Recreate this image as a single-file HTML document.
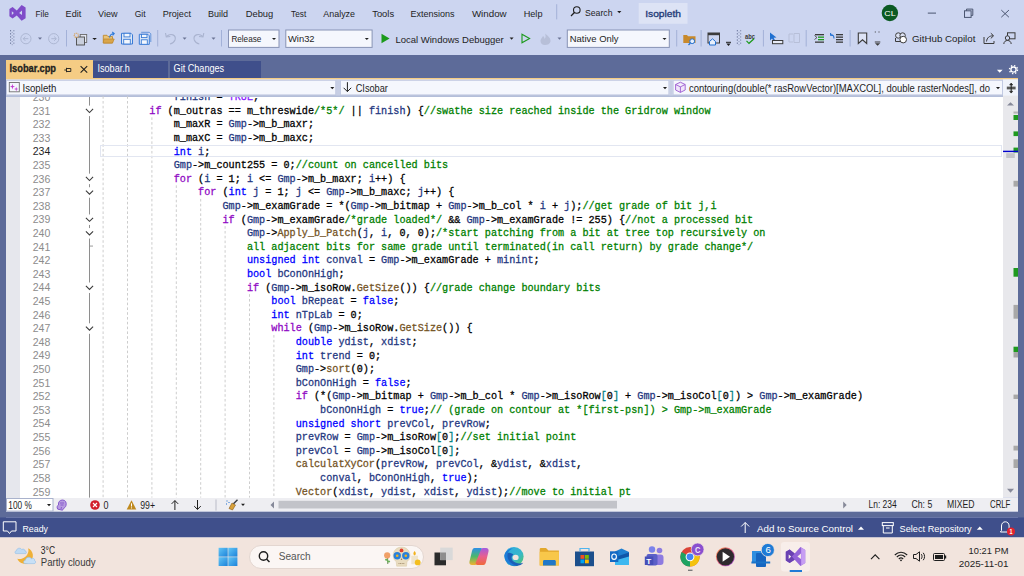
<!DOCTYPE html>
<html><head><meta charset="utf-8"><style>
html,body{margin:0;padding:0;width:1024px;height:576px;overflow:hidden;background:#CCD5F0}
svg{display:block}
text{font-family:"Liberation Sans",sans-serif}
text.mono{font-family:"Liberation Mono",monospace} .t{fill:#000} .ln{fill:#8C8C8C} .lnc{fill:#1E1E1E}
.t{stroke:#000} .k{fill:#0000FF;stroke:#0000FF} .c{fill:#8F08C4;stroke:#8F08C4} .v{fill:#1F377F;stroke:#1F377F} .f{fill:#74531F;stroke:#74531F} .g{fill:#008000;stroke:#008000} .mc{fill:#8A1BFF;stroke:#8A1BFF} .o{fill:#008080;stroke:#008080}
text.mono{stroke-width:0.28px}
</style></head><body>
<svg width="1024" height="576" viewBox="0 0 1024 576">
<rect x="0" y="0" width="1024" height="576" fill="#CCD5F0" />
<rect x="0" y="55" width="1024" height="23" fill="#5D6B99" />
<rect x="0" y="55" width="6" height="463" fill="#5D6B99" />
<rect x="1018" y="55" width="6" height="463" fill="#5D6B99" />
<rect x="0" y="511.5" width="1024" height="6" fill="#5D6B99" />
<rect x="6" y="60" width="87" height="18" fill="#F5CC84" />
<rect x="93" y="61" width="75" height="17" fill="#3F4F8B" />
<rect x="170" y="61" width="91" height="17" fill="#3F4F8B" />
<rect x="6" y="78" width="1012" height="1.6" fill="#F5CC84" />
<rect x="6" y="79.6" width="1012" height="16.4" fill="#F0F3FB" />
<rect x="6" y="95" width="997" height="2" fill="#B4BED9" />
<rect x="6" y="97" width="997" height="401" fill="#FFFFFF" />
<rect x="6" y="97" width="14" height="401" fill="#E6E7ED" />
<rect x="1003" y="79.6" width="15" height="418" fill="#E8E8EC" />
<rect x="6" y="498" width="1012" height="13.5" fill="#EEEEF2" />
<rect x="0" y="517.5" width="1024" height="20" fill="#3F4F8B" />
<rect x="0" y="537.4" width="1024" height="38.6" fill="#F2E4DD" />
<rect x="89.0" y="97.0" width="1" height="8.6" fill="#8E8E8E" />
<rect x="89.0" y="116.1" width="1" height="57.54" fill="#8E8E8E" />
<rect x="89.0" y="184.14" width="1" height="3.11" fill="#8E8E8E" />
<rect x="89.0" y="197.74" width="1" height="16.71" fill="#8E8E8E" />
<rect x="89.0" y="224.96" width="1" height="3.11" fill="#8E8E8E" />
<rect x="89.0" y="238.56" width="1" height="43.93" fill="#8E8E8E" />
<rect x="89.0" y="292.99" width="1" height="30.32" fill="#8E8E8E" />
<rect x="89.0" y="333.81" width="1" height="163.79" fill="#8E8E8E" />
<path d="M85.9,108.90 L89.5,112.50 L93.1,108.90" fill="none" stroke="#3A3A3A" stroke-width="1.05"/>
<path d="M85.9,176.94 L89.5,180.54 L93.1,176.94" fill="none" stroke="#3A3A3A" stroke-width="1.05"/>
<path d="M85.9,190.54 L89.5,194.14 L93.1,190.54" fill="none" stroke="#3A3A3A" stroke-width="1.05"/>
<path d="M85.9,217.76 L89.5,221.36 L93.1,217.76" fill="none" stroke="#3A3A3A" stroke-width="1.05"/>
<path d="M85.9,231.36 L89.5,234.96 L93.1,231.36" fill="none" stroke="#3A3A3A" stroke-width="1.05"/>
<path d="M85.9,285.79 L89.5,289.39 L93.1,285.79" fill="none" stroke="#3A3A3A" stroke-width="1.05"/>
<path d="M85.9,326.61 L89.5,330.21 L93.1,326.61" fill="none" stroke="#3A3A3A" stroke-width="1.05"/>
<path d="M89.5,246.07 L93,246.07" stroke="#8E8E8E" stroke-width="0.9"/>
<line x1="103.10" y1="96.20" x2="103.10" y2="497.6" stroke="#CDCDCD" stroke-width="1" stroke-dasharray="2.6,2.2"/>
<line x1="127.50" y1="96.20" x2="127.50" y2="497.6" stroke="#CDCDCD" stroke-width="1" stroke-dasharray="2.6,2.2"/>
<line x1="151.90" y1="117.31" x2="151.90" y2="497.6" stroke="#CDCDCD" stroke-width="1" stroke-dasharray="2.6,2.2"/>
<line x1="176.30" y1="185.34" x2="176.30" y2="497.6" stroke="#CDCDCD" stroke-width="1" stroke-dasharray="2.6,2.2"/>
<line x1="200.70" y1="198.95" x2="200.70" y2="497.6" stroke="#CDCDCD" stroke-width="1" stroke-dasharray="2.6,2.2"/>
<line x1="225.10" y1="226.16" x2="225.10" y2="497.6" stroke="#CDCDCD" stroke-width="1" stroke-dasharray="2.6,2.2"/>
<line x1="249.50" y1="294.20" x2="249.50" y2="497.6" stroke="#CDCDCD" stroke-width="1" stroke-dasharray="2.6,2.2"/>
<line x1="273.90" y1="335.02" x2="273.90" y2="497.6" stroke="#CDCDCD" stroke-width="1" stroke-dasharray="2.6,2.2"/>
<clipPath id="cc"><rect x="6" y="97" width="997" height="401"/></clipPath><g clip-path="url(#cc)">
<rect x="100.5" y="145.5" width="901" height="11" fill="none" stroke="#E2E6F1" stroke-width="1"/>
<text class="ln" x="50.3" y="100.89" font-size="11" text-anchor="end" textLength="17.6" lengthAdjust="spacingAndGlyphs">230</text>
<text class="mono t" xml:space="preserve" x="173.70" y="100.09" font-size="10.6" textLength="85.40" lengthAdjust="spacingAndGlyphs"><tspan class="v">finish</tspan> = <tspan class="mc">TRUE</tspan>;</text>
<text class="ln" x="50.3" y="114.50" font-size="11" text-anchor="end" textLength="17.6" lengthAdjust="spacingAndGlyphs">231</text>
<text class="mono t" xml:space="preserve" x="149.30" y="113.70" font-size="10.6" textLength="561.20" lengthAdjust="spacingAndGlyphs"><tspan class="c">if</tspan> (m_outras == m_threswide<tspan class="g">/*5*/</tspan> || <tspan class="v">finish</tspan>) {<tspan class="g">//swathe size reached inside the Gridrow window</tspan></text>
<text class="ln" x="50.3" y="128.11" font-size="11" text-anchor="end" textLength="17.6" lengthAdjust="spacingAndGlyphs">232</text>
<text class="mono t" xml:space="preserve" x="173.70" y="127.31" font-size="10.6" textLength="140.30" lengthAdjust="spacingAndGlyphs">m_maxR = <tspan class="v">Gmp</tspan>-&gt;m_b_maxr;</text>
<text class="ln" x="50.3" y="141.71" font-size="11" text-anchor="end" textLength="17.6" lengthAdjust="spacingAndGlyphs">233</text>
<text class="mono t" xml:space="preserve" x="173.70" y="140.91" font-size="10.6" textLength="140.30" lengthAdjust="spacingAndGlyphs">m_maxC = <tspan class="v">Gmp</tspan>-&gt;m_b_maxc;</text>
<text class="lnc" x="50.3" y="155.32" font-size="11" text-anchor="end" textLength="17.6" lengthAdjust="spacingAndGlyphs">234</text>
<text class="mono t" xml:space="preserve" x="173.70" y="154.52" font-size="10.6" textLength="36.60" lengthAdjust="spacingAndGlyphs"><tspan class="k">int</tspan> <tspan class="v">i</tspan>;</text>
<text class="ln" x="50.3" y="168.93" font-size="11" text-anchor="end" textLength="17.6" lengthAdjust="spacingAndGlyphs">235</text>
<text class="mono t" xml:space="preserve" x="173.70" y="168.13" font-size="10.6" textLength="274.50" lengthAdjust="spacingAndGlyphs"><tspan class="v">Gmp</tspan>-&gt;m_count255 = 0;<tspan class="g">//count on cancelled bits</tspan></text>
<text class="ln" x="50.3" y="182.54" font-size="11" text-anchor="end" textLength="17.6" lengthAdjust="spacingAndGlyphs">236</text>
<text class="mono t" xml:space="preserve" x="173.70" y="181.74" font-size="10.6" textLength="231.80" lengthAdjust="spacingAndGlyphs"><tspan class="c">for</tspan> (<tspan class="v">i</tspan> = 1; <tspan class="v">i</tspan> &lt;= <tspan class="v">Gmp</tspan>-&gt;m_b_maxr; <tspan class="v">i</tspan>++) {</text>
<text class="ln" x="50.3" y="196.14" font-size="11" text-anchor="end" textLength="17.6" lengthAdjust="spacingAndGlyphs">237</text>
<text class="mono t" xml:space="preserve" x="198.10" y="195.34" font-size="10.6" textLength="256.20" lengthAdjust="spacingAndGlyphs"><tspan class="c">for</tspan> (<tspan class="k">int</tspan> <tspan class="v">j</tspan> = 1; <tspan class="v">j</tspan> &lt;= <tspan class="v">Gmp</tspan>-&gt;m_b_maxc; <tspan class="v">j</tspan>++) {</text>
<text class="ln" x="50.3" y="209.75" font-size="11" text-anchor="end" textLength="17.6" lengthAdjust="spacingAndGlyphs">238</text>
<text class="mono t" xml:space="preserve" x="222.50" y="208.95" font-size="10.6" textLength="494.10" lengthAdjust="spacingAndGlyphs"><tspan class="v">Gmp</tspan>-&gt;m_examGrade = *(<tspan class="v">Gmp</tspan>-&gt;m_bitmap + <tspan class="v">Gmp</tspan>-&gt;m_b_col * <tspan class="v">i</tspan> + <tspan class="v">j</tspan>);<tspan class="g">//get grade of bit j,i</tspan></text>
<text class="ln" x="50.3" y="223.36" font-size="11" text-anchor="end" textLength="17.6" lengthAdjust="spacingAndGlyphs">239</text>
<text class="mono t" xml:space="preserve" x="222.50" y="222.56" font-size="10.6" textLength="530.70" lengthAdjust="spacingAndGlyphs"><tspan class="c">if</tspan> (<tspan class="v">Gmp</tspan>-&gt;m_examGrade<tspan class="g">/*grade loaded*/</tspan> &amp;&amp; <tspan class="v">Gmp</tspan>-&gt;m_examGrade != 255) {<tspan class="g">//not a processed bit</tspan></text>
<text class="ln" x="50.3" y="236.96" font-size="11" text-anchor="end" textLength="17.6" lengthAdjust="spacingAndGlyphs">240</text>
<text class="mono t" xml:space="preserve" x="246.90" y="236.16" font-size="10.6" textLength="518.50" lengthAdjust="spacingAndGlyphs"><tspan class="v">Gmp</tspan>-&gt;<tspan class="f">Apply_b_Patch</tspan>(<tspan class="v">j</tspan>, <tspan class="v">i</tspan>, 0, 0);<tspan class="g">/*start patching from a bit at tree top recursively on</tspan></text>
<text class="ln" x="50.3" y="250.57" font-size="11" text-anchor="end" textLength="17.6" lengthAdjust="spacingAndGlyphs">241</text>
<text class="mono t" xml:space="preserve" x="246.90" y="249.77" font-size="10.6" textLength="506.30" lengthAdjust="spacingAndGlyphs"><tspan class="g">all adjacent bits for same grade until terminated(in call return) by grade change*/</tspan></text>
<text class="ln" x="50.3" y="264.18" font-size="11" text-anchor="end" textLength="17.6" lengthAdjust="spacingAndGlyphs">242</text>
<text class="mono t" xml:space="preserve" x="246.90" y="263.38" font-size="10.6" textLength="292.80" lengthAdjust="spacingAndGlyphs"><tspan class="k">unsigned</tspan> <tspan class="k">int</tspan> <tspan class="v">conval</tspan> = <tspan class="v">Gmp</tspan>-&gt;m_examGrade + <tspan class="v">minint</tspan>;</text>
<text class="ln" x="50.3" y="277.78" font-size="11" text-anchor="end" textLength="17.6" lengthAdjust="spacingAndGlyphs">243</text>
<text class="mono t" xml:space="preserve" x="246.90" y="276.98" font-size="10.6" textLength="97.60" lengthAdjust="spacingAndGlyphs"><tspan class="k">bool</tspan> <tspan class="v">bConOnHigh</tspan>;</text>
<text class="ln" x="50.3" y="291.39" font-size="11" text-anchor="end" textLength="17.6" lengthAdjust="spacingAndGlyphs">244</text>
<text class="mono t" xml:space="preserve" x="246.90" y="290.59" font-size="10.6" textLength="353.80" lengthAdjust="spacingAndGlyphs"><tspan class="c">if</tspan> (<tspan class="v">Gmp</tspan>-&gt;m_isoRow.<tspan class="f">GetSize</tspan>()) {<tspan class="g">//grade change boundary bits</tspan></text>
<text class="ln" x="50.3" y="305.00" font-size="11" text-anchor="end" textLength="17.6" lengthAdjust="spacingAndGlyphs">245</text>
<text class="mono t" xml:space="preserve" x="271.30" y="304.20" font-size="10.6" textLength="128.10" lengthAdjust="spacingAndGlyphs"><tspan class="k">bool</tspan> <tspan class="v">bRepeat</tspan> = <tspan class="k">false</tspan>;</text>
<text class="ln" x="50.3" y="318.61" font-size="11" text-anchor="end" textLength="17.6" lengthAdjust="spacingAndGlyphs">246</text>
<text class="mono t" xml:space="preserve" x="271.30" y="317.81" font-size="10.6" textLength="91.50" lengthAdjust="spacingAndGlyphs"><tspan class="k">int</tspan> <tspan class="v">nTpLab</tspan> = 0;</text>
<text class="ln" x="50.3" y="332.21" font-size="11" text-anchor="end" textLength="17.6" lengthAdjust="spacingAndGlyphs">247</text>
<text class="mono t" xml:space="preserve" x="271.30" y="331.41" font-size="10.6" textLength="201.30" lengthAdjust="spacingAndGlyphs"><tspan class="c">while</tspan> (<tspan class="v">Gmp</tspan>-&gt;m_isoRow.<tspan class="f">GetSize</tspan>()) {</text>
<text class="ln" x="50.3" y="345.82" font-size="11" text-anchor="end" textLength="17.6" lengthAdjust="spacingAndGlyphs">248</text>
<text class="mono t" xml:space="preserve" x="295.70" y="345.02" font-size="10.6" textLength="122.00" lengthAdjust="spacingAndGlyphs"><tspan class="k">double</tspan> <tspan class="v">ydist</tspan>, <tspan class="v">xdist</tspan>;</text>
<text class="ln" x="50.3" y="359.43" font-size="11" text-anchor="end" textLength="17.6" lengthAdjust="spacingAndGlyphs">249</text>
<text class="mono t" xml:space="preserve" x="295.70" y="358.63" font-size="10.6" textLength="85.40" lengthAdjust="spacingAndGlyphs"><tspan class="k">int</tspan> <tspan class="v">trend</tspan> = 0;</text>
<text class="ln" x="50.3" y="373.03" font-size="11" text-anchor="end" textLength="17.6" lengthAdjust="spacingAndGlyphs">250</text>
<text class="mono t" xml:space="preserve" x="295.70" y="372.23" font-size="10.6" textLength="79.30" lengthAdjust="spacingAndGlyphs"><tspan class="v">Gmp</tspan>-&gt;<tspan class="f">sort</tspan>(0);</text>
<text class="ln" x="50.3" y="386.64" font-size="11" text-anchor="end" textLength="17.6" lengthAdjust="spacingAndGlyphs">251</text>
<text class="mono t" xml:space="preserve" x="295.70" y="385.84" font-size="10.6" textLength="115.90" lengthAdjust="spacingAndGlyphs"><tspan class="v">bConOnHigh</tspan> = <tspan class="k">false</tspan>;</text>
<text class="ln" x="50.3" y="400.25" font-size="11" text-anchor="end" textLength="17.6" lengthAdjust="spacingAndGlyphs">252</text>
<text class="mono t" xml:space="preserve" x="295.70" y="399.45" font-size="10.6" textLength="567.30" lengthAdjust="spacingAndGlyphs"><tspan class="c">if</tspan> (*(<tspan class="v">Gmp</tspan>-&gt;m_bitmap + <tspan class="v">Gmp</tspan>-&gt;m_b_col * <tspan class="v">Gmp</tspan>-&gt;m_isoRow<tspan class="o">[</tspan>0<tspan class="o">]</tspan> + <tspan class="v">Gmp</tspan>-&gt;m_isoCol<tspan class="o">[</tspan>0<tspan class="o">]</tspan>) &gt; <tspan class="v">Gmp</tspan>-&gt;m_examGrade)</text>
<text class="ln" x="50.3" y="413.85" font-size="11" text-anchor="end" textLength="17.6" lengthAdjust="spacingAndGlyphs">253</text>
<text class="mono t" xml:space="preserve" x="320.10" y="413.05" font-size="10.6" textLength="451.40" lengthAdjust="spacingAndGlyphs"><tspan class="v">bConOnHigh</tspan> = <tspan class="k">true</tspan>;<tspan class="g">// (grade on contour at *[first-psn]) &gt; Gmp-&gt;m_examGrade</tspan></text>
<text class="ln" x="50.3" y="427.46" font-size="11" text-anchor="end" textLength="17.6" lengthAdjust="spacingAndGlyphs">254</text>
<text class="mono t" xml:space="preserve" x="295.70" y="426.66" font-size="10.6" textLength="195.20" lengthAdjust="spacingAndGlyphs"><tspan class="k">unsigned</tspan> <tspan class="k">short</tspan> <tspan class="v">prevCol</tspan>, <tspan class="v">prevRow</tspan>;</text>
<text class="ln" x="50.3" y="441.07" font-size="11" text-anchor="end" textLength="17.6" lengthAdjust="spacingAndGlyphs">255</text>
<text class="mono t" xml:space="preserve" x="295.70" y="440.27" font-size="10.6" textLength="280.60" lengthAdjust="spacingAndGlyphs"><tspan class="v">prevRow</tspan> = <tspan class="v">Gmp</tspan>-&gt;m_isoRow<tspan class="o">[</tspan>0<tspan class="o">]</tspan>;<tspan class="g">//set initial point</tspan></text>
<text class="ln" x="50.3" y="454.67" font-size="11" text-anchor="end" textLength="17.6" lengthAdjust="spacingAndGlyphs">256</text>
<text class="mono t" xml:space="preserve" x="295.70" y="453.87" font-size="10.6" textLength="164.70" lengthAdjust="spacingAndGlyphs"><tspan class="v">prevCol</tspan> = <tspan class="v">Gmp</tspan>-&gt;m_isoCol<tspan class="o">[</tspan>0<tspan class="o">]</tspan>;</text>
<text class="ln" x="50.3" y="468.28" font-size="11" text-anchor="end" textLength="17.6" lengthAdjust="spacingAndGlyphs">257</text>
<text class="mono t" xml:space="preserve" x="295.70" y="467.48" font-size="10.6" textLength="286.70" lengthAdjust="spacingAndGlyphs"><tspan class="f">calculatXyCor</tspan>(<tspan class="v">prevRow</tspan>, <tspan class="v">prevCol</tspan>, &amp;<tspan class="v">ydist</tspan>, &amp;<tspan class="v">xdist</tspan>,</text>
<text class="ln" x="50.3" y="481.89" font-size="11" text-anchor="end" textLength="17.6" lengthAdjust="spacingAndGlyphs">258</text>
<text class="mono t" xml:space="preserve" x="320.10" y="481.09" font-size="10.6" textLength="158.60" lengthAdjust="spacingAndGlyphs"><tspan class="v">conval</tspan>, <tspan class="v">bConOnHigh</tspan>, <tspan class="k">true</tspan>);</text>
<text class="ln" x="50.3" y="495.50" font-size="11" text-anchor="end" textLength="17.6" lengthAdjust="spacingAndGlyphs">259</text>
<text class="mono t" xml:space="preserve" x="295.70" y="494.70" font-size="10.6" textLength="335.50" lengthAdjust="spacingAndGlyphs"><tspan class="f">Vector</tspan>(<tspan class="v">xdist</tspan>, <tspan class="v">ydist</tspan>, <tspan class="v">xdist</tspan>, <tspan class="v">ydist</tspan>);<tspan class="g">//move to initial pt</tspan></text>
</g>
<text x="35.6" y="16.9" font-size="9.8" fill="#1E1E1E" textLength="13.2" lengthAdjust="spacingAndGlyphs">File</text>
<text x="65.6" y="16.9" font-size="9.8" fill="#1E1E1E" textLength="15.7" lengthAdjust="spacingAndGlyphs">Edit</text>
<text x="98" y="16.9" font-size="9.8" fill="#1E1E1E" textLength="19.5" lengthAdjust="spacingAndGlyphs">View</text>
<text x="134.7" y="16.9" font-size="9.8" fill="#1E1E1E" textLength="10.9" lengthAdjust="spacingAndGlyphs">Git</text>
<text x="162.7" y="16.9" font-size="9.8" fill="#1E1E1E" textLength="28.3" lengthAdjust="spacingAndGlyphs">Project</text>
<text x="208.1" y="16.9" font-size="9.8" fill="#1E1E1E" textLength="20.0" lengthAdjust="spacingAndGlyphs">Build</text>
<text x="245.7" y="16.9" font-size="9.8" fill="#1E1E1E" textLength="27.6" lengthAdjust="spacingAndGlyphs">Debug</text>
<text x="291.1" y="16.9" font-size="9.8" fill="#1E1E1E" textLength="15.1" lengthAdjust="spacingAndGlyphs">Test</text>
<text x="323.3" y="16.9" font-size="9.8" fill="#1E1E1E" textLength="31.7" lengthAdjust="spacingAndGlyphs">Analyze</text>
<text x="372.2" y="16.9" font-size="9.8" fill="#1E1E1E" textLength="21.9" lengthAdjust="spacingAndGlyphs">Tools</text>
<text x="410.5" y="16.9" font-size="9.8" fill="#1E1E1E" textLength="44.1" lengthAdjust="spacingAndGlyphs">Extensions</text>
<text x="471.9" y="16.9" font-size="9.8" fill="#1E1E1E" textLength="34.8" lengthAdjust="spacingAndGlyphs">Window</text>
<text x="523.7" y="16.9" font-size="9.8" fill="#1E1E1E" textLength="18.8" lengthAdjust="spacingAndGlyphs">Help</text>
<path d="M9.4,9.0 L12.6,7.0 L16.8,10.4 L21.6,5.0 L25.6,7.4 L25.6,18.3 L21.6,20.8 L16.8,15.6 L12.6,18.4 L9.4,16.3 Z" fill="#7F4BC9"/>
<path d="M11.8,11.2 L13.9,13.0 L11.8,14.9 Z" fill="#CCD5F0"/>
<path d="M22.0,10.4 L19.1,12.9 L22.0,15.0 Z" fill="#CCD5F0"/>
<rect x="556.2" y="4.2" width="1" height="15.2" fill="#A3B1D8" />
<circle cx="576.8" cy="10.0" r="3.3" fill="none" stroke="#1E1E1E" stroke-width="1.1"/>
<path d="M574.4,12.5 L571.0,16.0" stroke="#1E1E1E" stroke-width="1.2"/>
<text x="585" y="16.3" font-size="9.8" fill="#1E1E1E" textLength="27.5" lengthAdjust="spacingAndGlyphs">Search</text>
<path d="M617.2,10.9 L621.4,10.9 L619.3,13.2 Z" fill="#1E1E1E"/>
<rect x="638.7" y="3" width="48.8" height="20.8" fill="#DDE3F5" />
<text x="645.2" y="17.2" font-size="9.8" fill="#243C78" stroke="#243C78" stroke-width="0.35" textLength="35.8" lengthAdjust="spacingAndGlyphs">Isopleth</text>
<circle cx="889.9" cy="13" r="8.2" fill="#0B5A23"/>
<text x="884.3" y="16.3" font-size="7.2" fill="#FFFFFF" textLength="11.4" lengthAdjust="spacingAndGlyphs">CL</text>
<rect x="927.8" y="12.6" width="8.2" height="1" fill="#4A5570" />
<rect x="964.5" y="10.8" width="6.6" height="6.6" fill="none" stroke="#4A5570" stroke-width="1"/>
<path d="M966.5,10.8 L966.5,9.1 L972.8,9.1 L972.8,15.4 L971.1,15.4" fill="none" stroke="#4A5570" stroke-width="1"/>
<path d="M1001.3,10.1 L1008.9,17.2 M1008.9,10.1 L1001.3,17.2" stroke="#4A5570" stroke-width="1"/>
<rect x="10" y="30.2" width="1.1" height="1.1" fill="#5E6A90" />
<rect x="13.3" y="30.2" width="1.1" height="1.1" fill="#7A86A8" />
<rect x="11.7" y="31.8" width="1" height="1" fill="#8E98B8" />
<rect x="10" y="33.3" width="1.1" height="1.1" fill="#5E6A90" />
<rect x="13.3" y="33.3" width="1.1" height="1.1" fill="#7A86A8" />
<rect x="11.7" y="34.9" width="1" height="1" fill="#8E98B8" />
<rect x="10" y="36.4" width="1.1" height="1.1" fill="#5E6A90" />
<rect x="13.3" y="36.4" width="1.1" height="1.1" fill="#7A86A8" />
<rect x="11.7" y="38.0" width="1" height="1" fill="#8E98B8" />
<rect x="10" y="39.5" width="1.1" height="1.1" fill="#5E6A90" />
<rect x="13.3" y="39.5" width="1.1" height="1.1" fill="#7A86A8" />
<rect x="11.7" y="41.1" width="1" height="1" fill="#8E98B8" />
<rect x="10" y="42.6" width="1.1" height="1.1" fill="#5E6A90" />
<rect x="13.3" y="42.6" width="1.1" height="1.1" fill="#7A86A8" />
<rect x="11.7" y="44.2" width="1" height="1" fill="#8E98B8" />
<circle cx="25.9" cy="38.7" r="5.1" fill="none" stroke="#A9B3CF" stroke-width="0.9"/>
<path d="M28.3,38.7 L23.3,38.7 M25.4,36.5 L23.2,38.7 L25.4,40.9" fill="none" stroke="#A9B3CF" stroke-width="0.9"/>
<path d="M38,37.6 L42,37.6 L40,39.8 Z" fill="#6A7494"/>
<circle cx="53.7" cy="38.7" r="5.1" fill="none" stroke="#A9B3CF" stroke-width="0.9"/>
<path d="M51.3,38.7 L56.2,38.7 M54.1,36.5 L56.3,38.7 L54.1,40.9" fill="none" stroke="#A9B3CF" stroke-width="0.9"/>
<rect x="66" y="30" width="1" height="16.5" fill="#A3B1D8" />
<rect x="80.2" y="34.5" width="6.5" height="8" fill="#E3E7F3" stroke="#6B6B6B" stroke-width="0.9"/>
<rect x="76.5" y="37" width="8" height="8" fill="#C9CFDD" stroke="#4A4A4A" stroke-width="0.9"/>
<circle cx="76.3" cy="35.3" r="2.1" fill="#CCD5F0" stroke="#D9A25A" stroke-width="1.1" stroke-dasharray="1.1,0.6"/>
<path d="M92.3,37.9 L96.9,37.9 L94.6,40 Z" fill="#1E1E1E"/>
<path d="M103.3,35.3 L107,35.3 L108,36.6 L112.5,36.6 L112.5,43 L103.3,43 Z" fill="#E9C47A" stroke="#C08A30" stroke-width="0.9"/>
<path d="M103.8,39 L114.2,39 L112.5,43 L103.3,43 Z" fill="#D9A54A" stroke="#C08A30" stroke-width="0.8"/>
<path d="M109.5,37.5 C110,35 111.5,33.8 113.8,33.5 M112.2,32 L114.2,33.5 L112.6,35.3" fill="none" stroke="#2F7BD8" stroke-width="1.1"/>
<path d="M121.5,33.3 L131,33.3 L132.5,34.8 L132.5,44 L121.5,44 Z" fill="#DCE7F7" stroke="#3A7BD5" stroke-width="1"/>
<rect x="124" y="33.3" width="6" height="3.6" fill="#F3F7FD" stroke="#3A7BD5" stroke-width="0.9"/>
<rect x="123.7" y="39.3" width="6.6" height="4.7" fill="#F3F7FD" stroke="#3A7BD5" stroke-width="0.9"/>
<path d="M141.2,32.3 L149.3,32.3 L150.8,33.8 L150.8,42" fill="none" stroke="#5B8FD8" stroke-width="0.9"/>
<path d="M139.3,34.3 L147.8,34.3 L149.3,35.8 L149.3,44.3 L139.3,44.3 Z" fill="#DCE7F7" stroke="#3A7BD5" stroke-width="1"/>
<rect x="141.5" y="34.3" width="5.5" height="3.3" fill="#F3F7FD" stroke="#3A7BD5" stroke-width="0.9"/>
<rect x="141.3" y="39.8" width="6" height="4.5" fill="#F3F7FD" stroke="#3A7BD5" stroke-width="0.9"/>
<rect x="157.2" y="30" width="1" height="16.5" fill="#A3B1D8" />
<path d="M166.5,36.5 C171,32.5 176.5,35 175,40 C174,42.5 172,43.5 170,44" fill="none" stroke="#A9B3CF" stroke-width="1.1"/>
<path d="M165.5,33 L166.3,37 L170.3,36.5" fill="none" stroke="#A9B3CF" stroke-width="1.1"/>
<path d="M182.6,37.6 L186.6,37.6 L184.6,39.8 Z" fill="#6A7494"/>
<path d="M202.8,36.5 C198.3,32.5 192.8,35 194.3,40 C195.3,42.5 197.3,43.5 199.3,44" fill="none" stroke="#A9B3CF" stroke-width="1.1"/>
<path d="M203.8,33 L203,37 L199,36.5" fill="none" stroke="#A9B3CF" stroke-width="1.1"/>
<path d="M211.5,37.6 L215.5,37.6 L213.5,39.8 Z" fill="#6A7494"/>
<rect x="221" y="30" width="1" height="16.5" fill="#A3B1D8" />
<rect x="228.5" y="30" width="50.5" height="17.4" fill="#F5F7FD" stroke="#8893B5" stroke-width="1"/>
<text x="231.4" y="42.4" font-size="9.8" fill="#1E1E1E" textLength="29.9" lengthAdjust="spacingAndGlyphs">Release</text>
<path d="M272,37.9 L276,37.9 L274,40.1 Z" fill="#1E1E1E"/>
<rect x="285.8" y="30" width="86.30000000000001" height="17.4" fill="#F5F7FD" stroke="#8893B5" stroke-width="1"/>
<text x="288" y="42.4" font-size="9.8" fill="#1E1E1E" textLength="26.6" lengthAdjust="spacingAndGlyphs">Win32</text>
<path d="M364.8,37.9 L368.8,37.9 L366.8,40.1 Z" fill="#1E1E1E"/>
<path d="M381.5,33.8 L389.6,38.5 L381.5,43.2 Z" fill="#1B9A1B"/>
<text x="395.4" y="43.2" font-size="9.8" fill="#1E1E1E" textLength="108.4" lengthAdjust="spacingAndGlyphs">Local Windows Debugger</text>
<path d="M509.6,37.6 L513.6,37.6 L511.6,39.8 Z" fill="#1E1E1E"/>
<path d="M522,34.2 L529.6,38.5 L522,42.8 Z" fill="none" stroke="#1B9A1B" stroke-width="1.1"/>
<path d="M545,33.5 C548,36 551,38 550.5,41.5 C550,44 547.5,45 545,45 C542,45 540.3,43 540.5,40.5 C540.8,38.5 542.5,37.5 543,36 C544.5,37 544.5,38.5 544.5,39 C546,37.5 545.8,35.5 545,33.5 Z" fill="#B7BFD8"/>
<path d="M557.5,37.6 L561.5,37.6 L559.5,39.8 Z" fill="#6A7494"/>
<rect x="567.3" y="30" width="102.0" height="17.4" fill="#F5F7FD" stroke="#8893B5" stroke-width="1"/>
<text x="569.8" y="42.4" font-size="9.8" fill="#1E1E1E" textLength="48.8" lengthAdjust="spacingAndGlyphs">Native Only</text>
<path d="M662.5,37.9 L666.5,37.9 L664.5,40.1 Z" fill="#1E1E1E"/>
<rect x="676.2" y="30" width="1" height="16.5" fill="#A3B1D8" />
<path d="M683.3,35 L687,35 L688,36.3 L695.5,36.3 L695.5,43 L683.3,43 Z" fill="#C8892B"/>
<circle cx="692.2" cy="41.2" r="2.4" fill="#E8F0FC" stroke="#1F6FD0" stroke-width="1"/>
<path d="M690.4,43 L688.5,45" stroke="#1F6FD0" stroke-width="1.2"/>
<rect x="700.6" y="30" width="1" height="16.5" fill="#A3B1D8" />
<rect x="708" y="33" width="11.5" height="10" fill="none" stroke="#3B3B3B" stroke-width="1"/>
<rect x="708" y="33" width="11.5" height="2.2" fill="#3B3B3B" />
<path d="M709.5,41.5 L712.5,38.8 L715.5,41.5 L715.5,45 L709.5,45 Z" fill="#E8F0FC" stroke="#1F6FD0" stroke-width="1"/>
<rect x="726" y="41.8" width="5" height="1" fill="#1E1E1E" />
<path d="M726.3,43.6 L730.7,43.6 L728.5,46 Z" fill="#1E1E1E"/>
<rect x="736.8" y="30.2" width="1.1" height="1.1" fill="#5E6A90" />
<rect x="740.1" y="30.2" width="1.1" height="1.1" fill="#7A86A8" />
<rect x="738.5" y="31.8" width="1" height="1" fill="#8E98B8" />
<rect x="736.8" y="33.3" width="1.1" height="1.1" fill="#5E6A90" />
<rect x="740.1" y="33.3" width="1.1" height="1.1" fill="#7A86A8" />
<rect x="738.5" y="34.9" width="1" height="1" fill="#8E98B8" />
<rect x="736.8" y="36.4" width="1.1" height="1.1" fill="#5E6A90" />
<rect x="740.1" y="36.4" width="1.1" height="1.1" fill="#7A86A8" />
<rect x="738.5" y="38.0" width="1" height="1" fill="#8E98B8" />
<rect x="736.8" y="39.5" width="1.1" height="1.1" fill="#5E6A90" />
<rect x="740.1" y="39.5" width="1.1" height="1.1" fill="#7A86A8" />
<rect x="738.5" y="41.1" width="1" height="1" fill="#8E98B8" />
<rect x="736.8" y="42.6" width="1.1" height="1.1" fill="#5E6A90" />
<rect x="740.1" y="42.6" width="1.1" height="1.1" fill="#7A86A8" />
<rect x="738.5" y="44.2" width="1" height="1" fill="#8E98B8" />
<text x="745" y="38.5" font-size="6.5" fill="#3B3B3B" textLength="10" lengthAdjust="spacingAndGlyphs" font-weight="bold">abc</text>
<path d="M746.5,40.8 L749,43.3 L754,38.8" fill="none" stroke="#1B9A1B" stroke-width="1.2"/>
<rect x="762.9" y="30" width="1" height="16.5" fill="#A3B1D8" />
<path d="M770,32.6 L770,40.5 L772,38.6 L774,41.8 L775.5,41 L773.6,37.8 L776.5,37.6 Z" fill="#1F6FD0"/>
<rect x="772.5" y="40.5" width="10.3" height="3.2" fill="#E8ECF8" stroke="#3B3B3B" stroke-width="1"/>
<path d="M789,34 L793,34 M789,34 L789,42 M789,42 L793,42 M794,33.5 L799.5,33.5 L799.5,42.5 L794,42.5 Z" fill="none" stroke="#B7BFD8" stroke-width="1"/>
<rect x="805.7" y="30" width="1" height="16.5" fill="#A3B1D8" />
<rect x="815" y="34" width="9" height="1.3" fill="#3B3B3B" />
<rect x="818" y="36.5" width="6" height="1.3" fill="#1B9A1B" />
<rect x="818" y="39" width="6" height="1.3" fill="#1B9A1B" />
<rect x="815" y="41.5" width="9" height="1.3" fill="#3B3B3B" />
<path d="M814.5,35.5 L817,37.5 L814.5,39.5" fill="none" stroke="#3B3B3B" stroke-width="0.8"/>
<rect x="836" y="34" width="7" height="1.3" fill="#3B3B3B" />
<rect x="836" y="36.5" width="7" height="1.3" fill="#3B3B3B" />
<rect x="836" y="39" width="7" height="1.3" fill="#3B3B3B" />
<rect x="836" y="41.5" width="7" height="1.3" fill="#3B3B3B" />
<path d="M834,38.5 C834,35.5 832.5,34.5 830.8,34.8 M830.6,33 L830.6,35.3 L832.8,35.5" fill="none" stroke="#1F6FD0" stroke-width="1.1"/>
<rect x="849.6" y="30" width="1" height="16.5" fill="#A3B1D8" />
<path d="M858.3,33 L866.7,33 L866.7,43.5 L862.5,39.8 L858.3,43.5 Z" fill="#DDE3F5" stroke="#3B3B3B" stroke-width="1.1"/>
<rect x="874.8" y="31.5" width="1" height="1" fill="#3B3B3B" />
<rect x="878.5" y="31.5" width="1" height="1" fill="#3B3B3B" />
<rect x="874.8" y="41.5" width="5.5" height="1" fill="#3B3B3B" />
<path d="M875,43.3 L880.2,43.3 L877.6,45.8 Z" fill="#3B3B3B"/>
<circle cx="898.3" cy="35.5" r="2.7" fill="#DDE3F5" stroke="#3B3B3B" stroke-width="1"/>
<circle cx="902.6" cy="35.5" r="2.7" fill="#DDE3F5" stroke="#3B3B3B" stroke-width="1"/>
<path d="M895.5,38 L895.5,41.5 L900,41.5" fill="none" stroke="#3B3B3B" stroke-width="1"/>
<circle cx="903.2" cy="39.6" r="3.3" fill="#FFFFFF" stroke="#3B3B3B" stroke-width="1"/>
<text x="912" y="41.5" font-size="9.8" fill="#1E1E1E" textLength="63.4" lengthAdjust="spacingAndGlyphs">GitHub Copilot</text>
<path d="M984,37 L984,43.5 L994,43.5 L994,41" fill="none" stroke="#3B3B3B" stroke-width="1"/>
<path d="M986.5,41.5 C987,37.5 989.5,35.8 993,35.8 M990.8,33.2 L993.6,35.8 L990.8,38.4" fill="none" stroke="#3B3B3B" stroke-width="1"/>
<rect x="1007.5" y="32.8" width="7.5" height="6" fill="none" stroke="#3B3B3B" stroke-width="1"/>
<circle cx="1007.5" cy="38" r="2.2" fill="#CCD5F0" stroke="#3B3B3B" stroke-width="1"/>
<path d="M1003.8,44 C1004,41.5 1005.5,40.5 1007.5,40.5 C1009.5,40.5 1011,41.5 1011.2,44" fill="none" stroke="#3B3B3B" stroke-width="1"/>
<text x="9.5" y="72.3" font-size="10.4" fill="#1E1E1E" stroke="#1E1E1E" stroke-width="0.3" font-weight="bold" textLength="46.5" lengthAdjust="spacingAndGlyphs">Isobar.cpp</text>
<path d="M64.3,70 L66.5,70 M66.5,67.8 L66.5,72.2 M66.5,68.5 L70.8,68.5 L70.8,71.5 L66.5,71.5" fill="none" stroke="#1E1E1E" stroke-width="0.9"/>
<path d="M80.6,66.2 L87.2,72.6 M87.2,66.2 L80.6,72.6" stroke="#1E1E1E" stroke-width="1.1"/>
<text x="97.5" y="72.4" font-size="10" fill="#FFFFFF" textLength="32.3" lengthAdjust="spacingAndGlyphs">Isobar.h</text>
<text x="173.6" y="72.4" font-size="10" fill="#FFFFFF" textLength="50.5" lengthAdjust="spacingAndGlyphs">Git Changes</text>
<path d="M996.9,69.8 L1002.6,69.8 L999.75,72.8 Z" fill="#FFFFFF"/>
<circle cx="1013.5" cy="69.6" r="4" fill="none" stroke="#FFFFFF" stroke-width="1.4" stroke-dasharray="1.4,1.74"/>
<circle cx="1013.5" cy="69.6" r="2.6" fill="none" stroke="#FFFFFF" stroke-width="1.3"/>
<rect x="336" y="79.6" width="4" height="16" fill="#C7CEE4" />
<rect x="669.2" y="79.6" width="3.6" height="16" fill="#C7CEE4" />
<rect x="6.5" y="80.3" width="329.2" height="14.6" fill="#F5F7FD" stroke="#C2CAE2" stroke-width="1"/>
<rect x="340.5" y="80.3" width="328.4" height="14.6" fill="#F5F7FD" stroke="#C2CAE2" stroke-width="1"/>
<rect x="673.1" y="80.3" width="329.4" height="14.6" fill="#F5F7FD" stroke="#C2CAE2" stroke-width="1"/>
<rect x="1003" y="79.6" width="15" height="16" fill="#F0F3FB" />
<rect x="9.3" y="82.5" width="10" height="9.3" fill="#F5F7FD" stroke="#6F6F6F" stroke-width="0.9"/>
<path d="M12.4,83.8 L13,86 L15,86.6 L13,87.2 L12.4,89.4 L11.8,87.2 L10,86.6 L11.8,86 Z" fill="#C13BD0"/>
<path d="M16.2,86.8 L16.7,88.6 L18.4,89.1 L16.7,89.6 L16.2,91.4 L15.7,89.6 L14,89.1 L15.7,88.6 Z" fill="#C13BD0"/>
<text x="22.5" y="91.6" font-size="10" fill="#1E1E1E" textLength="33.8" lengthAdjust="spacingAndGlyphs">Isopleth</text>
<path d="M330.3,87 L334.3,87 L332.3,89.2 Z" fill="#1E1E1E"/>
<path d="M347.4,82.2 L347.4,91.6 M343.6,87.8 L347.4,91.6 L351.2,87.8" fill="none" stroke="#1E1E1E" stroke-width="1"/>
<text x="355.7" y="91.6" font-size="10" fill="#1E1E1E" textLength="32.2" lengthAdjust="spacingAndGlyphs">CIsobar</text>
<path d="M663,87 L667,87 L665,89.2 Z" fill="#1E1E1E"/>
<path d="M680.4,82.2 L685.2,84.5 L685.2,90 L680.4,92.4 L675.6,90 L675.6,84.5 Z M675.6,84.5 L680.4,86.8 L685.2,84.5 M680.4,86.8 L680.4,92.4" fill="#F0E6FA" stroke="#9B59D0" stroke-width="0.9"/>
<text x="689" y="91.6" font-size="10" fill="#1E1E1E" textLength="301" lengthAdjust="spacingAndGlyphs">contouring(double(* rasRowVector)[MAXCOL], double rasterNodes[], do</text>
<path d="M996,87 L1000,87 L998,89.2 Z" fill="#1E1E1E"/>
<rect x="1006.8" y="86.6" width="8.8" height="2.8" fill="#5A5A5A" />
<path d="M1011.2,83.5 L1011.2,92.7" stroke="#2A2A2A" stroke-width="1.1"/>
<path d="M1009.6,85 L1011.2,83.1 L1012.8,85 Z M1009.6,91.2 L1011.2,93.1 L1012.8,91.2 Z" fill="#2A2A2A" stroke="#2A2A2A" stroke-width="0.6"/>
<path d="M1007,105.6 L1014,105.6 L1010.5,102.2 Z" fill="#868999"/>
<path d="M1007,488.8 L1014,488.8 L1010.5,492.8 Z" fill="#868999"/>
<rect x="1013.5" y="111.5" width="4.5" height="2.1" fill="#B5B5B5" />
<rect x="1013.5" y="115" width="4.5" height="5" fill="#1F9A1F" />
<rect x="1013.5" y="131.4" width="4.5" height="4.7" fill="#1F9A1F" />
<rect x="1013.5" y="147.6" width="4.5" height="4.9" fill="#1F9A1F" />
<rect x="1013.5" y="180.8" width="4.5" height="5.8" fill="#A8A8A8" />
<rect x="1013.5" y="268" width="4.5" height="8.7" fill="#1F9A1F" />
<rect x="1013.5" y="304.9" width="4.5" height="13.8" fill="#A8A8A8" />
<rect x="1013.5" y="346.7" width="4.5" height="5.3" fill="#1F9A1F" />
<rect x="1013.5" y="352" width="4.5" height="5.5" fill="#A8A8A8" />
<rect x="1013.5" y="394.6" width="4.5" height="4.4" fill="#A8A8A8" />
<rect x="1013.5" y="445.7" width="4.5" height="4.8" fill="#A8A8A8" />
<rect x="1013.5" y="459.3" width="4.5" height="8.7" fill="#A8A8A8" />
<rect x="1006.2" y="153.2" width="8.6" height="4.8" fill="#C2C3C9" />
<rect x="1003" y="150.7" width="15" height="1.4" fill="#0000CD" />
<rect x="6.5" y="498.5" width="46.5" height="12.6" fill="#FFFFFF" stroke="#A9B2CC" stroke-width="1"/>
<text x="8.3" y="508.6" font-size="10.4" fill="#1E1E1E" textLength="23.5" lengthAdjust="spacingAndGlyphs">100 %</text>
<path d="M47,504 L51,504 L49,506.2 Z" fill="#1E1E1E"/>
<path d="M57.8,509.2 C56.5,507.5 57.2,505.5 58.5,505 C58,502 59.8,500 62.5,500 C65.5,500 66.8,502.5 66,505.5 C65.6,507 64.5,508 63.5,508.5 L62.5,510.2 Z" fill="#B69BE0" stroke="#7E4FC8" stroke-width="0.9"/>
<path d="M60,503 L64,503 M60.5,505 L63.5,505 M61.5,507 L61,509" stroke="#7E4FC8" stroke-width="0.8"/>
<circle cx="95" cy="505" r="4.8" fill="#D21F2B"/>
<path d="M93,503 L97,507 M97,503 L93,507" stroke="#FFFFFF" stroke-width="1.1"/>
<text x="103.4" y="508.6" font-size="10.4" fill="#1E1E1E" textLength="5" lengthAdjust="spacingAndGlyphs">0</text>
<path d="M131.5,500.3 L136.3,509.5 L126.7,509.5 Z" fill="#C08A1F"/>
<rect x="131" y="503.3" width="1" height="3.2" fill="#FFFFFF" />
<rect x="131" y="507.4" width="1" height="1" fill="#FFFFFF" />
<text x="140.2" y="508.6" font-size="10.4" fill="#1E1E1E" textLength="14.8" lengthAdjust="spacingAndGlyphs">99+</text>
<path d="M174.9,510 L174.9,500.6 M171.6,503.9 L174.9,500.6 L178.2,503.9" fill="none" stroke="#1E1E1E" stroke-width="1"/>
<path d="M197.5,500 L197.5,509.4 M194.2,506.1 L197.5,509.4 L200.8,506.1" fill="none" stroke="#1E1E1E" stroke-width="1"/>
<rect x="215.5" y="499.5" width="1" height="11" fill="#B9BCC8" />
<path d="M229,508.5 L232,503 L235.5,505 L232.5,510 Z" fill="#D8A13A" stroke="#8B5B12" stroke-width="0.6"/>
<path d="M233.5,503.8 L237.5,499.8" stroke="#3B3B3B" stroke-width="1.4"/>
<rect x="226.5" y="500.5" width="1" height="1" fill="#1F6FD0" />
<rect x="228.5" y="502" width="1" height="1" fill="#1F6FD0" />
<rect x="226" y="503.5" width="1" height="1" fill="#1F6FD0" />
<path d="M241,503.8 L245,503.8 L243,506 Z" fill="#1E1E1E"/>
<path d="M274,501.5 L274,508.5 L270.5,505 Z" fill="#868999"/>
<rect x="278.5" y="500.8" width="338.5" height="7.7" fill="#C2C3C9" />
<path d="M843.2,501.5 L843.2,508.5 L846.7,505 Z" fill="#868999"/>
<text x="868.5" y="508.4" font-size="10.4" fill="#1E1E1E" textLength="28.2" lengthAdjust="spacingAndGlyphs">Ln: 234</text>
<text x="911.5" y="508.4" font-size="10.4" fill="#1E1E1E" textLength="20.8" lengthAdjust="spacingAndGlyphs">Ch: 5</text>
<text x="947" y="508.4" font-size="10.4" fill="#1E1E1E" textLength="27.5" lengthAdjust="spacingAndGlyphs">MIXED</text>
<text x="990" y="508.4" font-size="10.4" fill="#1E1E1E" textLength="20.4" lengthAdjust="spacingAndGlyphs">CRLF</text>
<path d="M3.3,521.8 L16,521.8 L16,531 L11.5,531 L9.5,533.5 L7.5,531 L3.3,531 Z" fill="none" stroke="#FFFFFF" stroke-width="1"/>
<text x="22.5" y="531.8" font-size="9.8" fill="#FFFFFF" textLength="25.5" lengthAdjust="spacingAndGlyphs">Ready</text>
<path d="M745.2,533 L745.2,522.5 M741.2,526.5 L745.2,522.5 L749.2,526.5" fill="none" stroke="#FFFFFF" stroke-width="1"/>
<text x="757" y="531.8" font-size="9.8" fill="#FFFFFF" textLength="96" lengthAdjust="spacingAndGlyphs">Add to Source Control</text>
<path d="M858,529.8 L864,529.8 L861,526.5 Z" fill="#FFFFFF"/>
<rect x="882.3" y="522.6" width="11" height="3" fill="none" stroke="#FFFFFF" stroke-width="1"/>
<path d="M883.3,525.6 L883.3,533 L892.3,533 L892.3,525.6 M886,528 L889.6,528" fill="none" stroke="#FFFFFF" stroke-width="1"/>
<text x="899.6" y="531.8" font-size="9.8" fill="#FFFFFF" textLength="72" lengthAdjust="spacingAndGlyphs">Select Repository</text>
<path d="M976.8,529.8 L982.8,529.8 L979.8,526.5 Z" fill="#FFFFFF"/>
<path d="M1001.5,530.5 L1001.5,526 C1001.5,523.2 1003.3,521.8 1005.3,521.8 C1007.3,521.8 1009.1,523.2 1009.1,526 L1009.1,530.5 L1010.2,532 L1000.4,532 Z" fill="none" stroke="#FFFFFF" stroke-width="1"/>
<circle cx="1011" cy="531.6" r="4" fill="#E3232F"/>
<text x="1009.6" y="534.3" font-size="6.5" fill="#FFFFFF" textLength="3" lengthAdjust="spacingAndGlyphs" font-weight="bold">1</text>
<path d="M28.2,548.3 A8.1,8.1 0 1,1 17.3,558.75 A8.8,8.8 0 0,0 28.2,548.3 Z" fill="#EFB037"/>
<path d="M16,553.6 C14.6,553.6 14.6,550.8 16.4,550.8 C16.6,548 20.5,547.3 21.8,549.6 C22.8,548.6 25.2,549.2 25,551 C26.8,551 26.8,553.6 25.3,553.6 Z" fill="#BFDAF4" stroke="#8FBDEA" stroke-width="0.6"/>
<path d="M25,563.6 C23.2,563.6 23.2,560.2 25.4,560.2 C25.7,557 30,556.2 31.6,558.8 C32.8,557.8 35,558.6 34.6,560.6 C36.2,561 35.8,563.6 34.2,563.6 Z" fill="#C8E0F6" stroke="#8FBDEA" stroke-width="0.6"/>
<text x="40.8" y="553.8" font-size="10" fill="#1E1E1E" textLength="14.2" lengthAdjust="spacingAndGlyphs">3°C</text>
<text x="40.8" y="566" font-size="10" fill="#3A3A3A" textLength="54.8" lengthAdjust="spacingAndGlyphs">Partly cloudy</text>
<rect x="218.6" y="547.8" width="9.1" height="8.8" fill="url(#win)" />
<rect x="228.3" y="547.8" width="9.1" height="8.8" fill="url(#win)" />
<rect x="218.6" y="557.2" width="9.1" height="8.8" fill="url(#win)" />
<rect x="228.3" y="557.2" width="9.1" height="8.8" fill="url(#win)" />
<rect x="249.5" y="545.5" width="174" height="23" rx="11.5" fill="#FBF6F4" stroke="#E3D6D0" stroke-width="1"/>
<circle cx="263.5" cy="556" r="4.2" fill="none" stroke="#1E1E1E" stroke-width="1.4"/>
<path d="M266.5,559 L269.5,562" stroke="#1E1E1E" stroke-width="1.5"/>
<text x="278.7" y="560.3" font-size="10.4" fill="#555555" textLength="32" lengthAdjust="spacingAndGlyphs">Search</text>
<path d="M387.5,557.5 L387.8,564" stroke="#6E8A5A" stroke-width="1"/>
<ellipse cx="386.6" cy="559.8" rx="1.6" ry="1" fill="#6BB25A"/><ellipse cx="388.6" cy="561.6" rx="1.6" ry="1" fill="#6BB25A"/>
<circle cx="387.2" cy="555.4" r="3.1" fill="#F0A068"/>
<path d="M393.2,555.5 C393.2,550.5 397,547.1 401.6,547.1 C406.2,547.1 410,550.5 410,555.5 C410,558.8 408.5,560.6 407,561.5 L406.5,566.2 L396.7,566.2 L396.2,561.5 C394.7,560.6 393.2,558.8 393.2,555.5 Z" fill="#E9DCC0" stroke="#D8C8A4" stroke-width="0.5"/>
<circle cx="397.2" cy="555.7" r="3.7" fill="#2A80DA"/><circle cx="405.8" cy="555.7" r="3.7" fill="#2A80DA"/>
<circle cx="397.2" cy="555.7" r="1.3" fill="#F2B21C"/><circle cx="405.8" cy="555.7" r="1.3" fill="#F2B21C"/>
<circle cx="401.5" cy="550.4" r="1.9" fill="#E0402E"/>
<path d="M400.7,559.8 L401.5,558.2 L402.3,559.8 Z" fill="#7A5A3A"/>
<path d="M398.5,563.5 L404.5,563.5" stroke="#A08A6A" stroke-width="0.9" stroke-dasharray="1,0.6"/>
<rect x="411.3" y="555.7" width="6.7" height="8.5" fill="#EFE4CC" />
<path d="M414.6,551 C416.2,552.8 416.2,554.6 414.6,555.4 C413,554.6 413,552.8 414.6,551 Z" fill="#F2B21C"/>
<circle cx="417.7" cy="562.4" r="2.9" fill="#F4BE1E"/>
<rect x="434.5" y="552.5" width="11.5" height="12.8" fill="#2B2B2B" />
<rect x="440.2" y="547.6" width="12.5" height="12.5" fill="#D9D9D9" />
<rect x="440.2" y="552.5" width="5.8" height="7.6" fill="#8E8E8E" />
<defs><linearGradient id="cpl" x1="0" y1="0" x2="0" y2="1"><stop offset="0" stop-color="#2D8FE8"/><stop offset="0.5" stop-color="#4DB86A"/><stop offset="1" stop-color="#F2B22E"/></linearGradient><linearGradient id="cpr" x1="0" y1="0" x2="0" y2="1"><stop offset="0" stop-color="#A35BE0"/><stop offset="0.5" stop-color="#E8608E"/><stop offset="1" stop-color="#F06A3A"/></linearGradient><linearGradient id="edg" x1="0" y1="0" x2="1" y2="1"><stop offset="0" stop-color="#2FA9E6"/><stop offset="0.6" stop-color="#38B8C8"/><stop offset="1" stop-color="#52C75A"/></linearGradient><linearGradient id="win" x1="0" y1="0" x2="1" y2="1"><stop offset="0" stop-color="#63C6F6"/><stop offset="1" stop-color="#1C82DA"/></linearGradient></defs>
<path d="M474.5,548 L480.5,548 C482,548 482.8,549 482.2,550.5 L477,563.5 C476.4,564.8 475.5,565 474.2,565 L472,565 C470,565 469,563.5 469.5,561.5 L472,551 C472.5,549 473.3,548 474.5,548 Z" fill="url(#cpl)"/>
<path d="M483.5,565 L477.5,565 C476,565 475.2,564 475.8,562.5 L481,549.5 C481.6,548.2 482.5,548 483.8,548 L486,548 C488,548 489,549.5 488.5,551.5 L486,562 C485.5,564 484.7,565 483.5,565 Z" fill="url(#cpr)"/>
<circle cx="514" cy="556.6" r="9.6" fill="url(#edg)"/>
<path d="M504.6,555 C505.5,561.5 510.5,566.2 516.5,566 C519.5,565.8 522,564.5 523.2,562.8 C520,564 515.5,563.5 513,561 C511,559 511,556 513.5,554.5 C510,552 505.5,552.5 504.6,555 Z" fill="#1B5FB8"/>
<path d="M504.4,556 C504.8,551 509,548.5 513,548.6 C508.8,550 507,553 507.6,557 C508.5,562 513,565 517,565.5 C510,567 504.6,562 504.4,556 Z" fill="#1E7BD8"/>
<ellipse cx="515.6" cy="557.4" rx="3" ry="2.6" fill="#F2E4DD"/>
<path d="M539.7,549.5 C539.7,548.5 540.2,548 541,548 L546,548 L548.5,550.5 L558.9,550.5 L558.9,565.4 L539.7,565.4 Z" fill="#E3A82C"/>
<rect x="539.7" y="551.8" width="19.2" height="13.6" fill="#F8C74A" />
<path d="M543,565.4 L543,561.5 C543,560.5 543.6,560 544.5,560 L554.3,560 C555.2,560 555.8,560.5 555.8,561.5 L555.8,565.4 Z" fill="#1F78C8"/>
<path d="M575,551.5 L594,551.5 L594,566.2 L575,566.2 Z" fill="#1C4F8C"/>
<path d="M580,551.5 L580,548.5 L589,548.5 L589,551.5" fill="none" stroke="#4FB4EE" stroke-width="1.2"/>
<rect x="580.5" y="555" width="3.8" height="3.8" fill="#F25022" />
<rect x="585" y="555" width="3.8" height="3.8" fill="#7FBA00" />
<rect x="580.5" y="559.5" width="3.8" height="3.8" fill="#00A4EF" />
<rect x="585" y="559.5" width="3.8" height="3.8" fill="#FFB900" />
<path d="M615,551.5 L621.5,548.6 L629,552 L629,565 L615,565 Z" fill="#1E7FD0"/>
<path d="M615,557 L629,552.5 L629,557 L618,561 Z" fill="#0F56A8"/>
<path d="M615,565 L615,560.5 L629,556.5 L629,565 Z" fill="#3DB8F0"/>
<rect x="610" y="551.3" width="8.3" height="10.7" fill="#1369C4" />
<ellipse cx="614.1" cy="556.7" rx="2.3" ry="2.7" fill="none" stroke="#FFFFFF" stroke-width="1.1"/>
<circle cx="659.5" cy="550.5" r="2.8" fill="#8E7BE0"/>
<circle cx="652" cy="549.5" r="3.2" fill="#7B83EB"/>
<rect x="654" y="554.5" width="9.5" height="10.5" rx="3" fill="#8E7BE0"/>
<rect x="646.5" y="554" width="11" height="11.5" rx="2" fill="#5B5FC7"/>
<rect x="644.8" y="556.5" width="8.5" height="8.5" fill="#464EB8" />
<text x="646.3" y="563.5" font-size="7" fill="#FFFFFF" textLength="5" lengthAdjust="spacingAndGlyphs" font-weight="bold">T</text>
<circle cx="690" cy="556.8" r="9.7" fill="#DB4437"/>
<path d="M690,556.8 L698.4,551.95 A9.7,9.7 0 0,1 690,566.5 Z" fill="#F4C20D"/>
<path d="M690,556.8 L690,566.5 A9.7,9.7 0 0,1 681.6,551.95 Z" fill="#1EA362"/>
<circle cx="690" cy="556.8" r="4.4" fill="#FFFFFF"/>
<circle cx="690" cy="556.8" r="3.4" fill="#4285F4"/>
<circle cx="697.6" cy="549.4" r="6.4" fill="#8A4FCF" stroke="#F2E4DD" stroke-width="0.7"/>
<text x="695.0" y="552.5" font-size="8.5" fill="#F0E8FA" textLength="5.4" lengthAdjust="spacingAndGlyphs" font-weight="bold">C</text>
<rect x="688" y="569.6" width="4.5" height="1.4" fill="#7A7A7A" />
<defs><linearGradient id="mpr" x1="0" y1="0" x2="1" y2="1"><stop offset="0" stop-color="#F08A3A"/><stop offset="0.5" stop-color="#E0608A"/><stop offset="1" stop-color="#8A4FD8"/></linearGradient></defs>
<circle cx="725.4" cy="556.8" r="9.5" fill="url(#mpr)"/>
<circle cx="725.4" cy="556.8" r="8.6" fill="#2E2A2E"/>
<path d="M722.6,551.8 L730,556.8 L722.6,561.8 Z" fill="#FFFFFF"/>
<path d="M752,551 L765,551 L765,562 L752,562 Z" fill="#2D8EE0"/>
<rect x="756" y="553" width="10" height="14" rx="1" fill="#1565C0"/>
<rect x="751.4" y="561.5" width="18.8" height="2" fill="#1A73C8" />
<circle cx="767.8" cy="550" r="6.6" fill="#1E7BD6" stroke="#F2E4DD" stroke-width="0.8"/>
<text x="765.4" y="553.3" font-size="9" fill="#FFFFFF" textLength="5.4" lengthAdjust="spacingAndGlyphs">6</text>
<rect x="781" y="542" width="29" height="29.6" rx="3" fill="#F8EEEA"/>
<g transform="translate(785.8,547) scale(1.2) translate(-9.4,-5)"><path d="M9.4,9.0 L12.6,7.0 L16.8,10.4 L21.6,5.0 L25.6,7.4 L25.6,18.3 L21.6,20.8 L16.8,15.6 L12.6,18.4 L9.4,16.3 Z" fill="#9464D8"/><path d="M9.4,9.0 L12.6,7.0 L16.8,10.4 L14.5,13 L16.8,15.6 L12.6,18.4 L9.4,16.3 Z" fill="#6A42B2"/><path d="M22.2,5.4 L25.6,7.4 L25.6,18.3 L22.2,20.4 Z" fill="#C79EF3"/><path d="M11.8,11.2 L13.9,13.0 L11.8,14.9 Z" fill="#F8EEEA"/><path d="M22.0,10.4 L19.1,12.9 L22.0,15.0 Z" fill="#F8EEEA"/></g>
<rect x="789.7" y="570" width="12.3" height="2" fill="#1F7AD6" />
<path d="M871,559.2 L875.2,554.8 L879.4,559.2" fill="none" stroke="#1E1E1E" stroke-width="1.1"/>
<path d="M894.8,555 C898.5,551.3 903.5,551.3 907.2,555 M896.8,557 C899.3,554.5 902.7,554.5 905.2,557 M898.8,559 C900,557.8 902,557.8 903.2,559" fill="none" stroke="#1E1E1E" stroke-width="1.1"/>
<circle cx="901" cy="560.3" r="0.9" fill="#1E1E1E"/>
<path d="M913.5,554.5 L916,554.5 L919.5,551.8 L919.5,561.2 L916,558.5 L913.5,558.5 Z" fill="none" stroke="#1E1E1E" stroke-width="1"/>
<path d="M921.3,554.2 C922.3,555.3 922.3,557.7 921.3,558.8 M923.2,552.8 C925,554.8 925,558.2 923.2,560.2" fill="none" stroke="#1E1E1E" stroke-width="1"/>
<rect x="933.5" y="553.5" width="11" height="7" rx="1" fill="none" stroke="#1E1E1E" stroke-width="1"/>
<rect x="935" y="555" width="8" height="4" fill="#1E1E1E" />
<rect x="944.8" y="555.5" width="1.4" height="3" fill="#1E1E1E" />
<text x="968.6" y="553.8" font-size="9.8" fill="#1E1E1E" textLength="39.8" lengthAdjust="spacingAndGlyphs">10:21 PM</text>
<text x="958.7" y="566.6" font-size="9.8" fill="#1E1E1E" textLength="49.7" lengthAdjust="spacingAndGlyphs">2025-11-01</text>
</svg>
</body></html>
